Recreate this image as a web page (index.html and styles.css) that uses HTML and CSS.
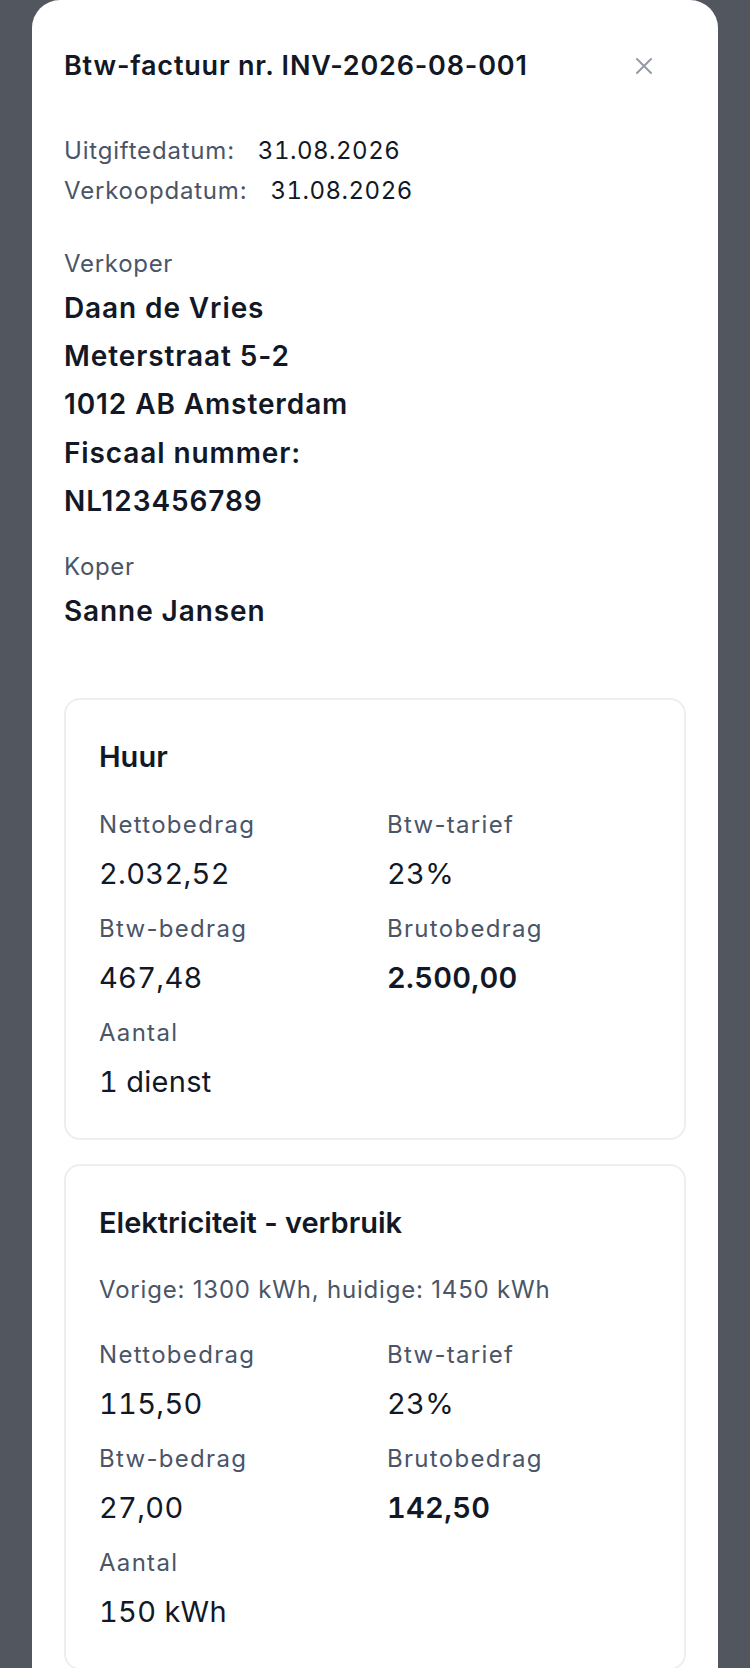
FILE: index.html
```html
<!DOCTYPE html>
<html lang="nl">
<head>
    <meta charset="UTF-8">
    <meta name="viewport" content="width=device-width, initial-scale=1.0">
    <title>Btw-factuur INV-2026-08-001</title>
    <link rel="stylesheet" href="styles.css">
</head>
<body>
    <div class="modal">
        <div class="modalHeader">
            <h1 class="modalTitle">Btw-factuur nr. INV-2026-08-001</h1>
            <button class="closeButton" aria-label="Sluiten">
                <svg width="18" height="18" viewBox="0 0 18 18">
                    <path d="M2 2 L16 16 M16 2 L2 16" stroke="#959ba5" stroke-width="2" stroke-linecap="round"/>
                </svg>
            </button>
        </div>

        <div class="dates">
            <div class="dateRow"><span class="label">Uitgiftedatum:</span><span class="dateValue">31.08.2026</span></div>
            <div class="dateRow"><span class="label">Verkoopdatum:</span><span class="dateValue">31.08.2026</span></div>
        </div>

        <div class="party">
            <div class="partyLabel">Verkoper</div>
            <div class="partyLine">Daan de Vries</div>
            <div class="partyLine">Meterstraat 5-2</div>
            <div class="partyLine">1012 AB Amsterdam</div>
            <div class="partyLine">Fiscaal nummer:</div>
            <div class="partyLine">NL123456789</div>
        </div>

        <div class="party buyer">
            <div class="partyLabel">Koper</div>
            <div class="partyLine">Sanne Jansen</div>
        </div>

        <!-- invoice lines -->
        <div class="lineCard">
            <h2 class="lineTitle">Huur</h2>
            <div class="lineGrid">
                <div class="field"><div class="fieldLabel">Nettobedrag</div><div class="fieldValue">2.032,52</div></div>
                <div class="field"><div class="fieldLabel">Btw-tarief</div><div class="fieldValue">23%</div></div>
                <div class="field"><div class="fieldLabel">Btw-bedrag</div><div class="fieldValue">467,48</div></div>
                <div class="field"><div class="fieldLabel">Brutobedrag</div><div class="fieldValue strong">2.500,00</div></div>
                <div class="field"><div class="fieldLabel">Aantal</div><div class="fieldValue">1 dienst</div></div>
            </div>
        </div>

        <div class="lineCard">
            <h2 class="lineTitle">Elektriciteit - verbruik</h2>
            <div class="lineNote">Vorige: 1300 kWh, huidige: 1450 kWh</div>
            <div class="lineGrid">
                <div class="field"><div class="fieldLabel">Nettobedrag</div><div class="fieldValue">115,50</div></div>
                <div class="field"><div class="fieldLabel">Btw-tarief</div><div class="fieldValue">23%</div></div>
                <div class="field"><div class="fieldLabel">Btw-bedrag</div><div class="fieldValue">27,00</div></div>
                <div class="field"><div class="fieldLabel">Brutobedrag</div><div class="fieldValue strong">142,50</div></div>
                <div class="field"><div class="fieldLabel">Aantal</div><div class="fieldValue">150 kWh</div></div>
            </div>
        </div>
    </div>
</body>
</html>
```

FILE: styles.css
```css
body {
    margin: 0;
    background-color: #52575f;
    font-family: "Inter", "Liberation Sans", sans-serif;
    color: #121826;
}

.modal {
    margin: 0 32px;
    min-height: 1668px;
    background-color: #ffffff;
    border-radius: 28px 28px 0 0;
    padding: 48px 32px 0;
    box-sizing: border-box;
}

.modalHeader {
    display: flex;
    align-items: center;
    justify-content: space-between;
}

.modalTitle {
    margin: 0;
    font-size: 27px;
    line-height: 36px;
    font-weight: 600;
    letter-spacing: 0.8px;
}

.closeButton {
    width: 32px;
    height: 32px;
    margin-right: 26px;
    padding: 0;
    border: none;
    background: none;
    display: flex;
    align-items: center;
    justify-content: center;
    cursor: pointer;
}

.dates {
    margin-top: 47px;
}

.dateRow {
    font-size: 24px;
    line-height: 40px;
    letter-spacing: 0.8px;
}

.label {
    color: #4a5567;
}

.dateValue {
    margin-left: 23px;
    font-variant-numeric: tabular-nums;
    letter-spacing: 0.5px;
}

.party {
    margin-top: 33px;
}

.party.buyer {
    margin-top: 22px;
}

.partyLabel {
    font-size: 24px;
    line-height: 40px;
    letter-spacing: 0.7px;
    color: #4a5567;
}

.partyLine {
    font-size: 28px;
    line-height: 48.2px;
    font-weight: 600;
    letter-spacing: 0.9px;
}

.lineCard {
    margin-top: 63px;
    border: 2px solid #eceef1;
    border-radius: 16px;
    padding: 39px 33px 36px;
}

.lineCard + .lineCard {
    margin-top: 24px;
}

.lineTitle {
    margin: 0 0 34px;
    font-size: 29px;
    line-height: 36px;
    font-weight: 600;
    letter-spacing: 0;
}

.lineCard + .lineCard .lineTitle {
    margin-bottom: 33px;
}

.lineNote {
    font-size: 24px;
    line-height: 32px;
    letter-spacing: 0.8px;
    color: #4a5567;
    margin-bottom: 33px;
}

.lineGrid {
    display: grid;
    grid-template-columns: 1fr 1fr;
    column-gap: 24px;
    row-gap: 19px;
}

.fieldLabel {
    font-size: 24px;
    line-height: 32px;
    letter-spacing: 1.3px;
    color: #4a5567;
}

.fieldValue {
    margin-top: 13px;
    font-size: 29px;
    line-height: 40px;
    letter-spacing: 0.3px;
    font-variant-numeric: tabular-nums;
}

.fieldValue.strong {
    font-weight: 600;
}
```
